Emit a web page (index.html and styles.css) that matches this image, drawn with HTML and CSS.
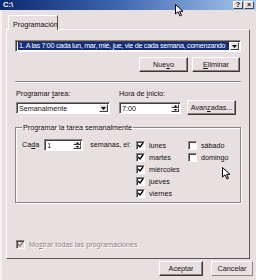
FILE: index.html
```html
<!DOCTYPE html>
<html lang="es">
<head>
<meta charset="utf-8">
<link rel="stylesheet" href="styles.css">
</head>
<body>
<div class="window">
  <div class="titlebar">
    <span class="title">C:\</span>
    <div class="tbtns">
      <span class="tbtn">?</span>
      <span class="tbtn">×</span>
    </div>
  </div>
  <div class="tabs"><div class="tab">Programación</div></div>
  <div class="panel">
    <div class="combo wide">
      <div class="combo-text sel">1. A las 7:00 cada lun, mar, mié, jue, vie de cada semana, comenzando</div>
      <div class="dropbtn"><svg width="5" height="3" viewBox="0 0 5 3"><polygon points="0,0 5,0 2.5,3" fill="#000"/></svg></div>
    </div>
    <div class="btnrow">
      <div class="btn btn-nuevo">Nue<u>v</u>o</div>
      <div class="btn btn-elim"><u>E</u>liminar</div>
    </div>
    <div class="sep"></div>
    <div class="fieldrow">
      <div class="field f-tarea">
        <div class="lbl">Programar <u>t</u>area:</div>
        <div class="combo">
          <div class="combo-text">Semanalmente</div>
          <div class="dropbtn"><svg width="5" height="3" viewBox="0 0 5 3"><polygon points="0,0 5,0 2.5,3" fill="#000"/></svg></div>
        </div>
      </div>
      <div class="field f-hora">
        <div class="lbl">Hora de <u>i</u>nicio:</div>
        <div class="spin">
          <div class="spin-text">7:00</div>
          <div class="spinbtns">
            <div class="sb"><svg width="3" height="2" viewBox="0 0 3 2"><polygon points="0,2 3,2 1.5,0" fill="#000"/></svg></div>
            <div class="sb"><svg width="3" height="2" viewBox="0 0 3 2"><polygon points="0,0 3,0 1.5,2" fill="#000"/></svg></div>
          </div>
        </div>
      </div>
      <div class="btn btn-adv">Avan<u>z</u>adas...</div>
    </div>
    <fieldset class="group">
      <legend>Programar la tarea semanalmente</legend>
      <div class="grouprow">
        <div class="cada">Ca<u>d</u>a</div>
        <div class="spin spin-small">
          <div class="spin-text">1</div>
          <div class="spinbtns">
            <div class="sb"><svg width="3" height="2" viewBox="0 0 3 2"><polygon points="0,2 3,2 1.5,0" fill="#000"/></svg></div>
            <div class="sb"><svg width="3" height="2" viewBox="0 0 3 2"><polygon points="0,0 3,0 1.5,2" fill="#000"/></svg></div>
          </div>
        </div>
        <div class="semanas">semanas, el:</div>
        <div class="days">
          <div class="chk on"><span class="box"><svg width="7" height="7" viewBox="0 0 7 7"><polyline points="1,3 3,5 6,1" fill="none" stroke="#000" stroke-width="1.4"/></svg></span><span>lunes</span></div>
          <div class="chk"><span class="box"></span><span>sábado</span></div>
          <div class="chk on"><span class="box"><svg width="7" height="7" viewBox="0 0 7 7"><polyline points="1,3 3,5 6,1" fill="none" stroke="#000" stroke-width="1.4"/></svg></span><span>martes</span></div>
          <div class="chk"><span class="box"></span><span>domingo</span></div>
          <div class="chk on"><span class="box"><svg width="7" height="7" viewBox="0 0 7 7"><polyline points="1,3 3,5 6,1" fill="none" stroke="#000" stroke-width="1.4"/></svg></span><span>miércoles</span></div>
          <div></div>
          <div class="chk on"><span class="box"><svg width="7" height="7" viewBox="0 0 7 7"><polyline points="1,3 3,5 6,1" fill="none" stroke="#000" stroke-width="1.4"/></svg></span><span>jueves</span></div>
          <div></div>
          <div class="chk on"><span class="box"><svg width="7" height="7" viewBox="0 0 7 7"><polyline points="1,3 3,5 6,1" fill="none" stroke="#000" stroke-width="1.4"/></svg></span><span>viernes</span></div>
        </div>
      </div>
    </fieldset>
    <div class="chk showall disabled"><span class="box"><svg width="7" height="7" viewBox="0 0 7 7"><polyline points="1,3 3,5 6,1" fill="none" stroke="#8a8484" stroke-width="1.4"/></svg></span><span>Mo<u>s</u>trar todas las programaciones</span></div>
  </div>
  <div class="footer">
    <div class="btn btn-ok">Aceptar</div>
    <div class="btn btn-cancel">Cancelar</div>
  </div>
  <svg class="cursor c1" width="9" height="13" viewBox="0 0 9 13"><polygon points="0.5,0.5 0.5,10 3,7.8 5,12 6.5,11.3 4.6,7.3 8,7.3" fill="#fff" stroke="#000" stroke-width="1"/></svg>
  <svg class="cursor c2" width="9" height="13" viewBox="0 0 9 13"><polygon points="0.5,0.5 0.5,10 3,7.8 5,12 6.5,11.3 4.6,7.3 8,7.3" fill="#fff" stroke="#000" stroke-width="1"/></svg>
</div>
</body>
</html>
```
FILE: styles.css
```css
* { box-sizing: border-box; }
html, body { margin: 0; padding: 0; }
body {
  width: 256px;
  height: 280px;
  overflow: hidden;
  background: #e8dfe0;
  font-family: "Liberation Sans", Arial, sans-serif;
  font-size: 7.2px;
  color: #111;
}
u { text-decoration-thickness: 1px; text-underline-offset: 1px; }
.window {
  position: relative;
  width: 256px;
  height: 280px;
  border-left: 2px solid #f6f2f2;
}
.titlebar {
  height: 10px;
  margin-left: -2px;
  background: linear-gradient(90deg, #0c2a72 0%, #3b64ad 45%, #a9c9ef 100%);
  display: flex;
  align-items: center;
  justify-content: space-between;
  padding: 0 2px 0 3px;
}
.title { color: #fff; font-weight: bold; font-size: 7.5px; line-height: 10px; }
.tbtns { display: flex; gap: 1px; }
.tbtn {
  width: 10px; height: 8px;
  background: #e8dfe0;
  border: 1px solid;
  border-color: #fff #444 #444 #fff;
  font-size: 7px; font-weight: bold;
  line-height: 6px; text-align: center;
}
.tabs { padding: 5px 0 0 6px; height: 19px; display: flex; align-items: flex-end; }
.tab {
  height: 15px;
  width: 50px;
  padding: 4px 0 0 4px;
  border: 1px solid;
  border-color: #fff #5a5454 transparent #fff;
  border-bottom: none;
  position: relative;
  top: 1px;
  background: #e8dfe0;
  z-index: 1;
}
.panel {
  margin-left: 4px;
  width: 244px;
  height: 230px;
  border: 1px solid;
  border-color: #fff #5a5454 #5a5454 #fff;
  padding: 10px 8px 0 8px;
  display: flex;
  flex-direction: column;
}
.combo, .spin {
  display: flex;
  height: 12px;
  background: #fff;
  border: 1px solid;
  border-color: #8a8484 #fff #fff #8a8484;
  box-shadow: inset 1px 1px 0 #404040;
}
.combo-text, .spin-text {
  flex: 1;
  padding: 1px 0 0 2px;
  white-space: nowrap;
  overflow: hidden;
  line-height: 9px;
}
.combo.wide .combo-text { margin: 1px 1px 1px 2px; padding: 0 1px; letter-spacing: -0.3px; }
.combo-text.sel { background: #132c7c; color: #fff; line-height: 8px; }
.dropbtn {
  width: 9px;
  margin: 1px 1px 1px 0;
  background: #e8dfe0;
  border: 1px solid;
  border-color: #fff #404040 #404040 #fff;
  display: flex; align-items: center; justify-content: center;
}
.btnrow { display: flex; justify-content: flex-end; gap: 4px; margin-top: 5px; padding-right: 1px; }
.btn {
  height: 15px;
  display: flex; align-items: center; justify-content: center;
  border: 1px solid;
  border-color: #fff #3c3838 #3c3838 #fff;
  box-shadow: inset -1px -1px 0 #8a8484;
  background: #e8dfe0;
}
.btn-nuevo { width: 49px; }
.btn-elim { width: 48px; }
.sep { margin-top: 9px; height: 2px; border-top: 1px solid #8a8484; border-bottom: 1px solid #fff; }
.fieldrow { display: flex; align-items: flex-end; margin-top: 6px; padding-left: 1px; }
.lbl { line-height: 9px; margin-bottom: 4px; }
.f-tarea .combo { width: 94px; }
.f-hora { margin-left: 9px; }
.f-hora .spin { width: 62px; }
.spinbtns { display: flex; flex-direction: column; width: 8px; margin: 1px 1px 1px 0; }
.sb {
  flex: 1;
  background: #e8dfe0;
  border: 1px solid;
  border-color: #fff #404040 #404040 #fff;
  display: flex; align-items: center; justify-content: center;
}
.btn-adv { width: 49px; margin-left: 6px; margin-bottom: -1px; }
.group {
  margin: 9px 0 0 0;
  padding: 7px 0 0 6px;
  height: 80px;
  border: 1px solid #8a8484;
  box-shadow: 1px 1px 0 #fff, inset 1px 1px 0 #fff;
  min-width: 0;
}
.group legend { padding: 0 1px; margin-left: 0; line-height: 9px; }
.grouprow { display: flex; align-items: flex-start; }
.cada { line-height: 12px; margin-right: 5px; }
.spin-small { width: 39px; }
.semanas { line-height: 12px; margin-left: 7px; }
.days {
  margin-left: 5px;
  display: grid;
  grid-template-columns: 52px auto;
  grid-auto-rows: 12px;
}
.chk { display: flex; align-items: center; gap: 4px; line-height: 9px; }
.box {
  width: 9px; height: 9px;
  background: #fff;
  border: 1px solid;
  border-color: #8a8484 #fff #fff #8a8484;
  box-shadow: inset 1px 1px 0 #404040;
  display: flex; align-items: center; justify-content: center;
}
.showall { margin-top: 37px; margin-left: 1px; }
.disabled { color: #8a8484; text-shadow: 1px 1px 0 #fff; }
.disabled .box { background: #e8dfe0; }
.footer { display: flex; justify-content: flex-end; gap: 8px; padding: 2px 3px 0 0; }
.btn-ok { width: 44px; }
.btn-cancel { width: 42px; border-color: #fff #8a8484 #8a8484 #fff; box-shadow: none; }
.cursor { position: absolute; }
.c1 { left: 173px; top: 4px; }
.c2 { left: 220px; top: 167px; }
```
